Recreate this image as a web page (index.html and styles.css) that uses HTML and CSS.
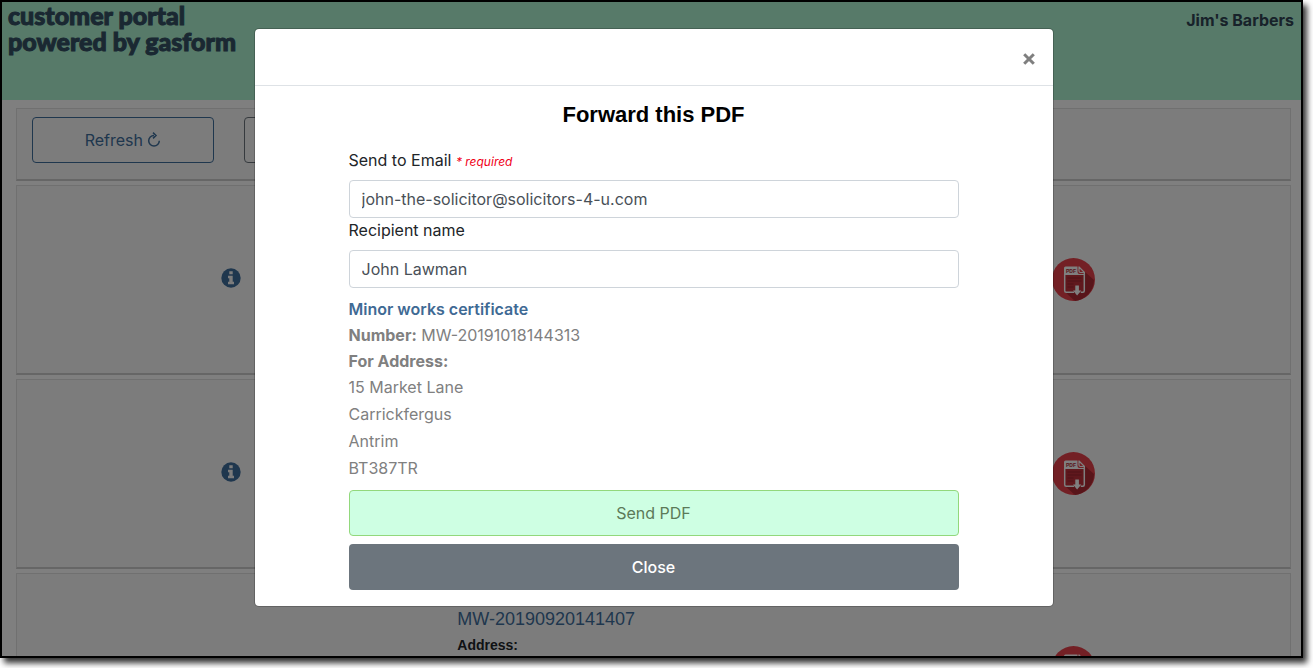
FILE: index.html
```html
<!DOCTYPE html>
<html lang="en">
<head>
    <meta charset="UTF-8">
    <meta name="viewport" content="width=device-width, initial-scale=1.0">
    <title>Customer portal</title>
    <link rel="stylesheet" href="styles.css">
</head>
<body>
    <!-- Shared icons -->
    <svg class="sprite" aria-hidden="true">
        <symbol id="icon-info" viewBox="0 0 20 20">
            <circle cx="10" cy="10" r="9.700" fill="currentColor"/>
            <path class="info-mark" d="M8.300 3.200h3.400v3H8.300zM7 7.800h4.700v6H13v2.400H7v-2.400h1.300v-3.600H7z"/>
        </symbol>
        <symbol id="icon-pdf" viewBox="0 0 43 43">
            <circle cx="21.500" cy="21.500" r="21.500" fill="#e6404a"/>
            <path fill="#b02a35" d="M33 14l9 8a21.500 21.500 0 0 1-19 21l-10-9z"/>
            <path fill="#c0303a" d="M12.500 17h19.500v17H12.500z"/>
            <path fill="#fff" d="M12 17V10a1.500 1.500 0 0 1 1.500-1.500H25.500v5.500a2 2 0 0 0 2 2H32.500v1z"/>
            <path fill="none" stroke="#fff" stroke-width="1.500" stroke-linejoin="round" d="M22 34.300H14.200a1.500 1.500 0 0 1-1.500-1.500V16M32.300 15v17.800a1.500 1.500 0 0 1-1.500 1.500h-2"/>
            <path fill="#e6404a" stroke="#fff" stroke-width="1.200" stroke-linejoin="round" d="M27 9v4a1.500 1.500 0 0 0 1.500 1.500h4z"/>
            <text x="14" y="14.500" class="pdf-text">PDF</text>
            <path stroke="#9c2630" stroke-width="1" d="M15.500 20h14M15.500 23h14M15.500 26h6M15.500 29h6"/>
            <path fill="#fff" d="M23.300 27.500h3.600v5h2.400L25.100 37.500 21 32.500h2.300z"/>
        </symbol>
    </svg>

    <div class="frame">
        <header class="portal-header">
            <h1 class="brand">customer portal<br>powered by gasform</h1>
            <span class="account">Jim's Barbers</span>
        </header>

        <main class="portal-main">
            <section class="card toolbar">
                <button type="button" class="tool-btn">Refresh
                    <svg class="refresh-icon" viewBox="0 0 14 16" aria-hidden="true">
                        <path fill="none" stroke="currentColor" stroke-width="1.500" d="M7 3.500a5.300 5.300 0 1 0 5.300 5.300M6 .6L9 3.500 6 6.400"/>
                    </svg>
                </button>
                <button type="button" class="tool-btn tool-btn-muted" aria-label="More"></button>
            </section>

            <section class="card record">
                <a href="#" class="info-link" aria-label="Details"><svg class="icon-info"><use href="#icon-info"/></svg></a>
                <div class="record-text"></div>
                <a href="#" class="pdf-link" aria-label="Download PDF"><svg class="icon-pdf"><use href="#icon-pdf"/></svg></a>
            </section>

            <section class="card record">
                <a href="#" class="info-link" aria-label="Details"><svg class="icon-info"><use href="#icon-info"/></svg></a>
                <div class="record-text"></div>
                <a href="#" class="pdf-link" aria-label="Download PDF"><svg class="icon-pdf"><use href="#icon-pdf"/></svg></a>
            </section>

            <section class="card record">
                <div></div>
                <div class="record-text">
                    <a href="#" class="record-number">MW-20190920141407</a>
                    <strong class="record-label">Address:</strong>
                </div>
                <a href="#" class="pdf-link" aria-label="Download PDF"><svg class="icon-pdf"><use href="#icon-pdf"/></svg></a>
            </section>
        </main>

        <div class="backdrop">
            <div class="modal" role="dialog" aria-modal="true" aria-labelledby="modal-title">
                <div class="modal-header">
                    <button type="button" class="modal-close" aria-label="Dismiss">
                        <svg class="close-icon" viewBox="0 0 12 12" aria-hidden="true">
                            <path stroke="currentColor" stroke-width="3" d="M1.200 1.200l9.600 9.600M10.800 1.200l-9.600 9.600"/>
                        </svg>
                    </button>
                </div>
                <form class="modal-body">
                    <h2 class="modal-title" id="modal-title">Forward this PDF</h2>

                    <label for="email">Send to Email <em class="required">* required</em></label>
                    <input type="email" id="email" value="john-the-solicitor@solicitors-4-u.com">

                    <label for="recipient">Recipient name</label>
                    <input type="text" id="recipient" value="John Lawman">

                    <div class="certificate">
                        <p class="certificate-title">Minor works certificate</p>
                        <p><strong>Number:</strong> MW-20191018144313</p>
                        <p><strong>For Address:</strong></p>
                        <address>
                            15 Market Lane<br>
                            Carrickfergus<br>
                            Antrim<br>
                            BT387TR
                        </address>
                    </div>

                    <button type="button" class="btn btn-send">Send PDF</button>
                    <button type="button" class="btn btn-close">Close</button>
                </form>
            </div>
        </div>
    </div>
</body>
</html>
```

FILE: styles.css
```css
* {
    box-sizing: border-box;
}

body {
    margin: 0;
    padding: 0 10px 10px 0;
    background-color: #fff;
    color: #212529;
    font-family: Inter, "Liberation Sans", sans-serif;
    font-size: 16px;
    line-height: 24px;
}

.sprite {
    display: none;
}

.frame {
    position: relative;
    height: calc(100vh - 10px);
    overflow: hidden;
    border: 2px solid #000;
    background-color: #fff;
    box-shadow: 4px 5px 6px rgba(0, 0, 0, 0.8);
}

/* Portal page */
.portal-header {
    display: flex;
    justify-content: space-between;
    height: 98px;
    padding: 0 7px 0 6px;
    background-color: #aef4d2;
}

.brand {
    margin: 0;
    color: #345064;
    font-family: Lato, sans-serif;
    font-size: 25px;
    font-weight: 900;
    line-height: 26px;
    -webkit-text-stroke: 1px #345064;
}

.account {
    padding-top: 6px;
    color: #304454;
    font-weight: 700;
}

.portal-main {
    padding: 8px 10px 0 14px;
}

.card {
    margin-bottom: 4px;
    border: 1px solid #e0e0e0;
    border-bottom: 2px solid #ccc;
    background-color: #f9f9f9;
}

.toolbar {
    display: grid;
    grid-template-columns: repeat(6, 1fr);
    gap: 30px;
    padding: 8px 15px 16px;
}

.tool-btn {
    height: 46px;
    border: 1px solid #3f6e9c;
    border-radius: 4px;
    background: none;
    color: #3f6e9c;
    font: inherit;
    cursor: pointer;
}

.tool-btn-muted {
    border-color: #6c757d;
}

.refresh-icon {
    width: 14px;
    height: 16px;
    vertical-align: -2px;
}

.record {
    display: grid;
    grid-template-columns: repeat(3, 1fr);
    align-items: center;
    min-height: 190px;
}

.info-link,
.pdf-link {
    display: flex;
    justify-content: center;
}

.info-link {
    padding: 0 0 4px 4px;
    color: #3f6e9c;
}

.info-mark {
    fill: #f9f9f9;
}

.pdf-link {
    padding-right: 8px;
}

.icon-info {
    width: 20px;
    height: 20px;
}

.icon-pdf {
    width: 43px;
    height: 43px;
}

.pdf-text {
    fill: #b02a35;
    font-family: "Liberation Sans", sans-serif;
    font-size: 5px;
    font-weight: 700;
}

.record-text {
    display: flex;
    flex-direction: column;
    align-self: start;
    padding: 32px 16px 0;
    font-family: "Liberation Sans", sans-serif;
}

.record-number {
    color: #3f6e9c;
    font-size: 18px;
    line-height: 26px;
    text-decoration: none;
}

.record-label {
    font-size: 14px;
    line-height: 26px;
}

/* Modal */
.backdrop {
    position: absolute;
    inset: 0;
    padding: 26px 0 0 4px;
    background-color: rgba(0, 0, 0, 0.5);
}

.modal {
    max-width: 800px;
    margin: 0 auto;
    border: 1px solid rgba(0, 0, 0, 0.2);
    border-radius: 5px;
    background-color: #fff;
    background-clip: padding-box;
}

.modal-header {
    display: flex;
    justify-content: flex-end;
    align-items: center;
    height: 57px;
    padding: 4px 14px 0;
    border-bottom: 1px solid #dee2e6;
}

.modal-close {
    display: flex;
    padding: 4px;
    border: none;
    background: none;
    color: #7f7f7f;
    cursor: pointer;
}

.close-icon {
    width: 12px;
    height: 12px;
}

.modal-body {
    padding: 16px 94px;
}

.modal-title {
    margin: 0 0 20px;
    color: #000;
    font-family: "Liberation Sans", sans-serif;
    font-size: 22px;
    line-height: 26px;
    text-align: center;
}

.modal-body label {
    display: block;
    margin-bottom: 8px;
}

.required {
    color: #f00018;
    font-size: 12px;
    line-height: 12px;
}

.modal-body input {
    display: block;
    width: 100%;
    height: 38px;
    padding: 6px 12px;
    border: 1px solid #ced4da;
    border-radius: 4px;
    background-color: #fff;
    color: #495057;
    font: inherit;
}

.certificate {
    padding: 8px 0;
    color: #808080;
    line-height: 26px;
}

.certificate p {
    margin: 0;
}

.certificate .certificate-title {
    color: #3f6a94;
    font-weight: 600;
}

.certificate address {
    font-style: normal;
    line-height: 27px;
}

.btn {
    display: block;
    width: 100%;
    height: 46px;
    border: 1px solid transparent;
    border-radius: 4px;
    font: inherit;
    cursor: pointer;
}

.btn-send {
    margin-bottom: 8px;
    border-color: #92d87c;
    background-color: #ceffe3;
    color: #5c7a58;
}

.btn-close {
    background-color: #6c757d;
    color: #fff;
    font-weight: 500;
}
```
